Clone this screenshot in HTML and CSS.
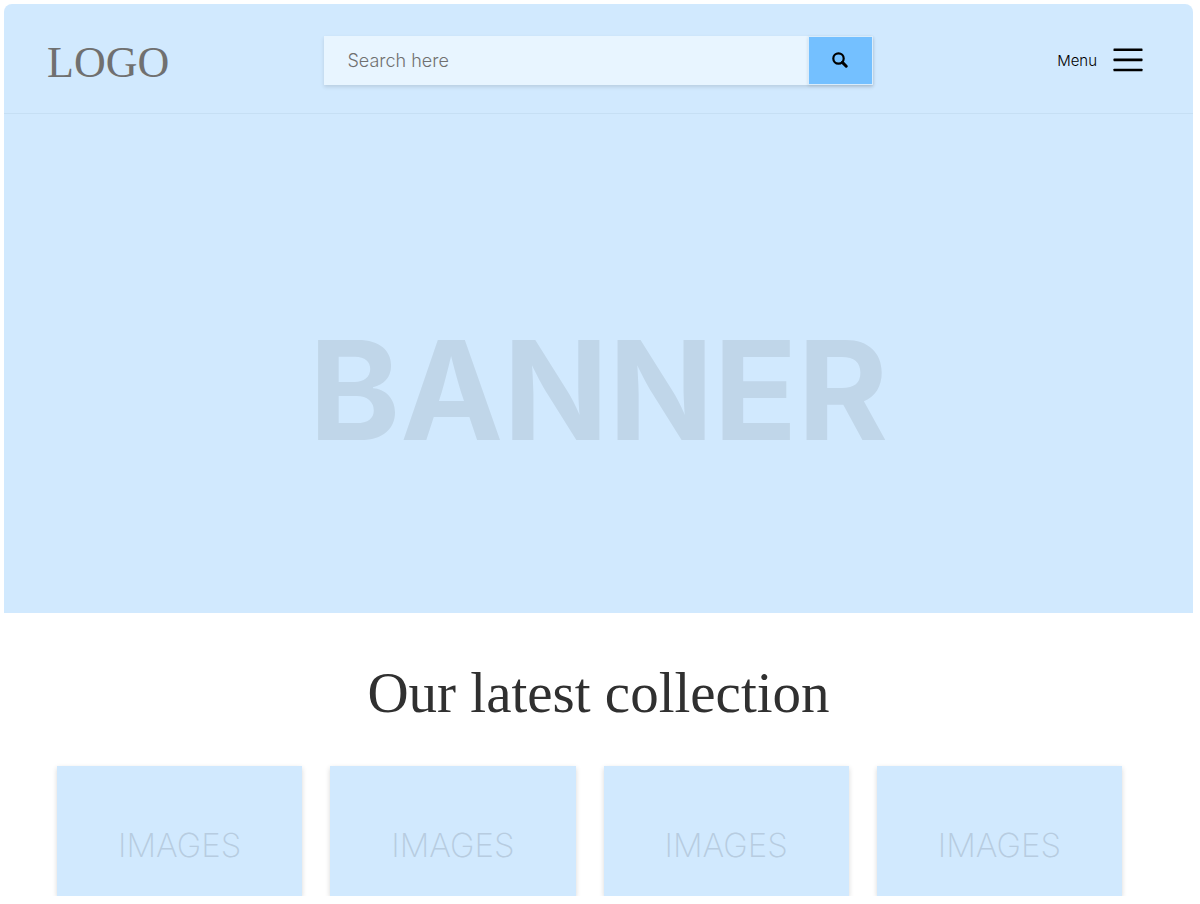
FILE: index.html
```html
<!DOCTYPE html>
<html lang="en">
<head>
  <meta charset="UTF-8" />
  <meta name="viewport" content="width=device-width, initial-scale=1" />
  <title>Our latest collection</title>
  <link rel="stylesheet" href="styles.css">
</head>
<body>
<div class="page">
  <header class="header">
    <a class="logo" href="#">LOGO</a>

    <form class="search">
      <input type="search" name="q" placeholder="Search here" aria-label="Search here" />
      <button type="button" aria-label="Search">
        <svg width="16" height="16" viewBox="0 0 16 16" fill="none" stroke="#000">
          <circle cx="6.5" cy="6.5" r="5.2" stroke-width="2.2" />
          <path d="M10.4 10.4L14.2 14.2" stroke-width="3" stroke-linecap="round" />
        </svg>
      </button>
    </form>

    <button type="button" class="menu">
      Menu
      <svg width="30" height="24" viewBox="0 0 30 24" fill="#000">
        <rect x="0.5" y="0.5" width="29" height="2.6" rx="0.6" />
        <rect x="0.5" y="10.6" width="29" height="2.6" rx="0.6" />
        <rect x="0.5" y="20.7" width="29" height="2.6" rx="0.6" />
      </svg>
    </button>
  </header>

  <section class="banner">BANNER</section>

  <main class="collection">
    <h1>Our latest collection</h1>
    <div class="cards">
      <div class="card">IMAGES</div>
      <div class="card">IMAGES</div>
      <div class="card">IMAGES</div>
      <div class="card">IMAGES</div>
    </div>
  </main>
</div>
</body>
</html>
```
FILE: styles.css
```css
* {
  box-sizing: border-box;
}
body {
  margin: 4px 7px 8px 4px;
  background: #fff;
  font-family: Inter, "Liberation Sans", sans-serif;
  color: #000;
}

.page {
  border-radius: 8px 8px 0 0;
  overflow: hidden;
}

/* header */
.header {
  display: flex;
  align-items: center;
  justify-content: space-between;
  height: 110px;
  padding: 3px 50px 0 43px;
  background: #d1e9fe;
  border-bottom: 1px solid #c6dff4;
}
.logo {
  flex: 1;
  padding-top: 4px;
  font-family: "Liberation Serif", serif;
  font-size: 44px;
  color: #707070;
  text-decoration: none;
}

.search {
  display: flex;
  width: 549px;
  height: 49px;
  margin: 0 4px 0 10px;
  background: #e8f5ff;
  box-shadow: 0 2px 4px rgba(0, 0, 0, 0.12);
}
.search input {
  flex: 1;
  min-width: 0;
  padding: 0 24px;
  border: none;
  background: none;
  font: 300 18px Inter, "Liberation Sans", sans-serif;
  color: #333;
}
.search input::placeholder {
  color: #707070;
}
.search button {
  display: flex;
  align-items: center;
  justify-content: center;
  width: 65px;
  padding: 0;
  border: 1px solid #d9ecfb;
  background: #74c0ff;
  box-shadow: 0 1px 3px rgba(0, 0, 0, 0.12);
  cursor: pointer;
}

.menu {
  display: flex;
  flex: 1;
  align-items: center;
  justify-content: flex-end;
  gap: 16px;
  padding: 0;
  border: none;
  background: none;
  font: 300 15px Inter, "Liberation Sans", sans-serif;
  color: #000;
  cursor: pointer;
}

/* banner */
.banner {
  display: flex;
  align-items: center;
  justify-content: center;
  height: 499px;
  padding-top: 52px;
  background: #d1e9fe;
  font-size: 138px;
  font-weight: 700;
  color: #c0d6e9;
}

/* collection */
.collection {
  padding: 43px 71px 0 53px;
}
.collection h1 {
  margin: 0 -18px 36px 0;
  font-family: "Liberation Serif", serif;
  font-size: 57px;
  font-weight: 400;
  line-height: 74px;
  text-align: center;
  color: #303030;
}
.cards {
  display: grid;
  grid-template-columns: repeat(4, 1fr);
  gap: 28px;
}
.card {
  padding: 58px 0 30px;
  background: #d1e9fe;
  box-shadow: 0 2px 5px rgba(0, 0, 0, 0.16);
  font-size: 33px;
  font-weight: 200;
  line-height: 42px;
  text-align: center;
  color: #b7cce0;
}
```
